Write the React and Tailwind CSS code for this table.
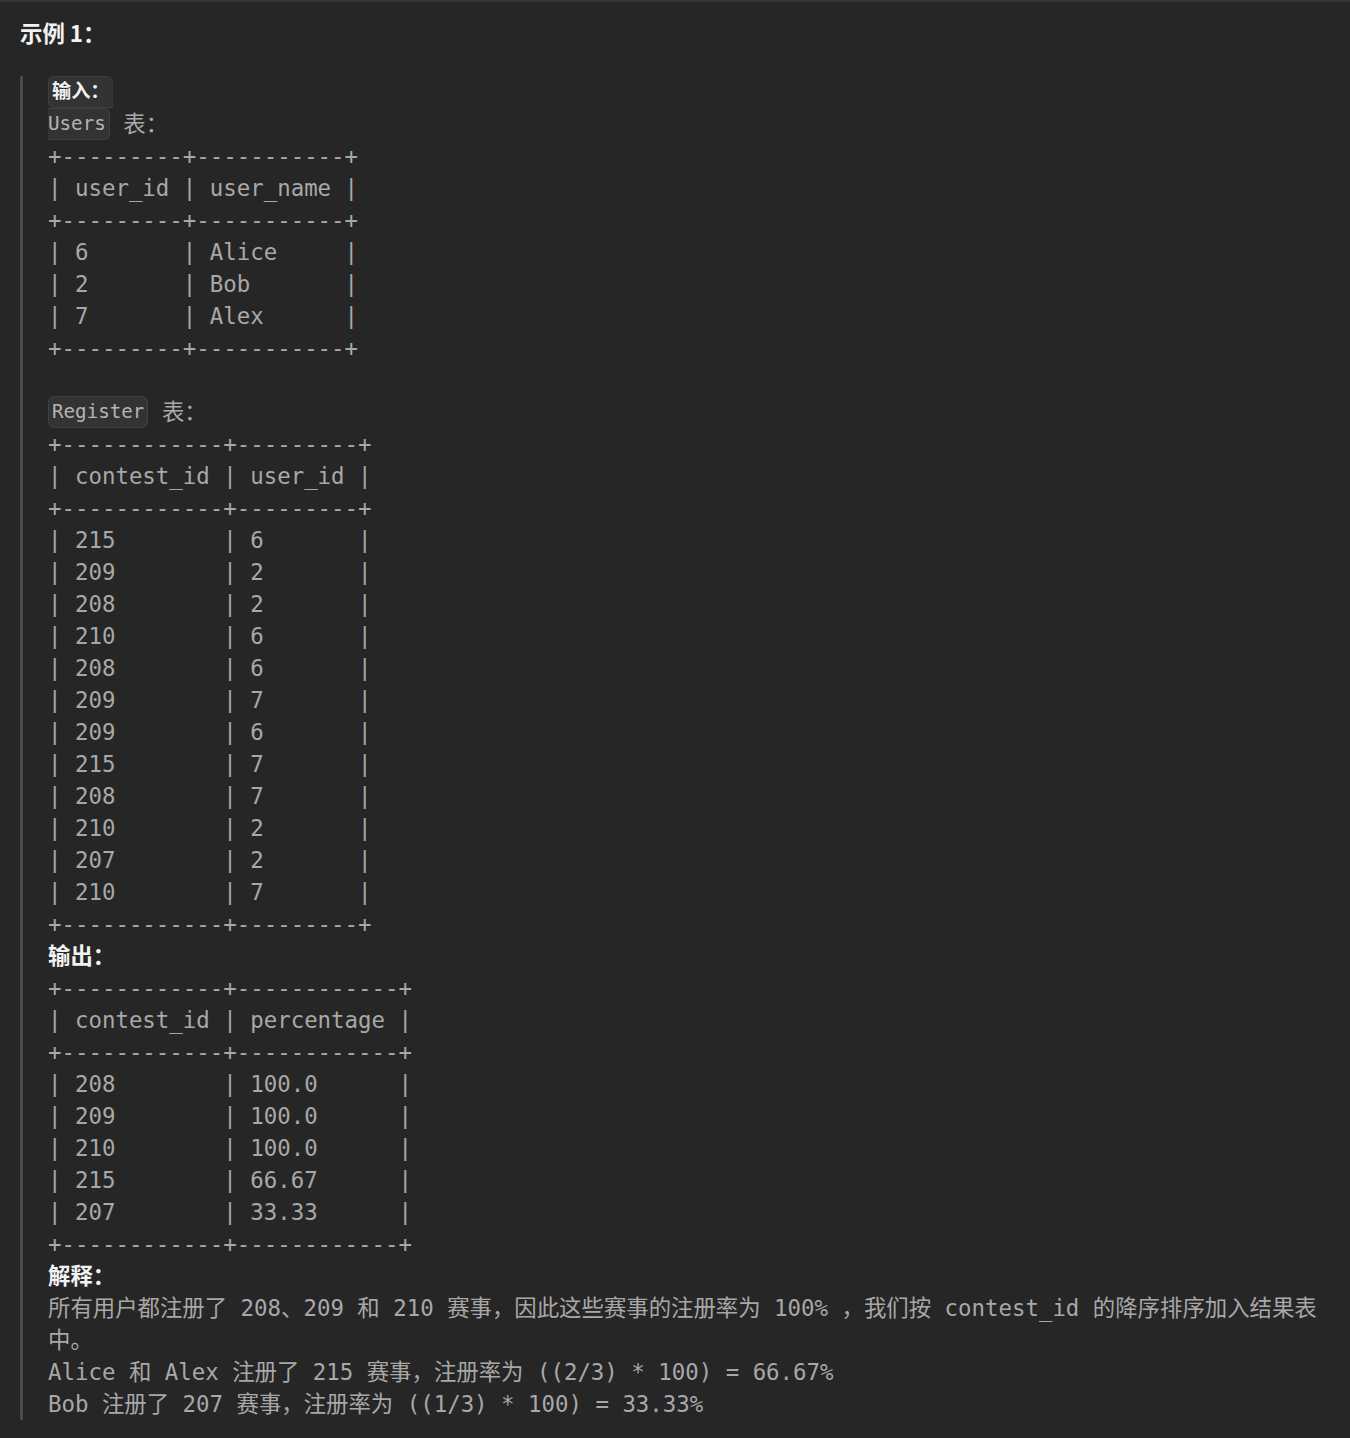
import React from "react";

const mono = { fontFamily: '"DejaVu Sans Mono", "Noto Sans CJK SC", monospace' };

function Line({ children, className = "" }) {
  return (
    <div className={"h-[32px] leading-[32px] whitespace-pre text-[22.4px] text-[#a8a8a8] " + className}>
      {children}
    </div>
  );
}

function Code({ children, className = "" }) {
  return (
    <span
      className={"inline-block align-top h-[32px] leading-[30px] border border-[#404040] bg-[#333333] text-[19.2px] text-[#b4b4b4] " + className}
    >
      {children}
    </span>
  );
}

function Bold({ children }) {
  return <span className="font-bold text-[#f2f2f2]">{children}</span>;
}

const users = [
  "+---------+-----------+",
  "| user_id | user_name |",
  "+---------+-----------+",
  "| 6       | Alice     |",
  "| 2       | Bob       |",
  "| 7       | Alex      |",
  "+---------+-----------+",
];

const register = [
  "+------------+---------+",
  "| contest_id | user_id |",
  "+------------+---------+",
  "| 215        | 6       |",
  "| 209        | 2       |",
  "| 208        | 2       |",
  "| 210        | 6       |",
  "| 208        | 6       |",
  "| 209        | 7       |",
  "| 209        | 6       |",
  "| 215        | 7       |",
  "| 208        | 7       |",
  "| 210        | 2       |",
  "| 207        | 2       |",
  "| 210        | 7       |",
  "+------------+---------+",
];

const output = [
  "+------------+------------+",
  "| contest_id | percentage |",
  "+------------+------------+",
  "| 208        | 100.0      |",
  "| 209        | 100.0      |",
  "| 210        | 100.0      |",
  "| 215        | 66.67      |",
  "| 207        | 33.33      |",
  "+------------+------------+",
];

export default function App() {
  return (
    <div className="min-h-[1438px] w-full bg-[#262626] border-t-2 border-[#343434]" style={mono}>
      <div
        className="pt-[14px] pl-[20px] h-[46px] leading-[32px] text-[22.4px] font-bold text-[#f2f2f2]"
        style={{ fontFamily: '"Noto Sans CJK SC", "Noto Sans", sans-serif' }}
      >
        示例 1：
      </div>
      <div className="mt-[28px] ml-[20px] border-l-[3px] border-[#4a4a4a] pl-[25px]">
        <Line>
          <Code className="rounded-t-[6px] rounded-bl-[6px] px-[3px] border-r-0">
            <Bold>输入：</Bold>
          </Code>
        </Line>
        <Line>
          <Code className="rounded-r-[6px] rounded-l-none border-l-0 pl-0 pr-[3px]">Users</Code>
          {" 表："}
        </Line>
        {users.map((l, i) => (
          <Line key={"u" + i}>{l}</Line>
        ))}
        <Line>{" "}</Line>
        <Line>
          <Code className="rounded-[6px] px-[3px]">Register</Code>
          {" 表："}
        </Line>
        {register.map((l, i) => (
          <Line key={"r" + i}>{l}</Line>
        ))}
        <Line>
          <Bold>输出：</Bold>
        </Line>
        {output.map((l, i) => (
          <Line key={"o" + i}>{l}</Line>
        ))}
        <Line>
          <Bold>解释：</Bold>
        </Line>
        <Line>所有用户都注册了 208、209 和 210 赛事，因此这些赛事的注册率为 100% ，我们按 contest_id 的降序排序加入结果表</Line>
        <Line>中。</Line>
        <Line>Alice 和 Alex 注册了 215 赛事，注册率为 ((2/3) * 100) = 66.67%</Line>
        <Line>Bob 注册了 207 赛事，注册率为 ((1/3) * 100) = 33.33%</Line>
      </div>
    </div>
  );
}
